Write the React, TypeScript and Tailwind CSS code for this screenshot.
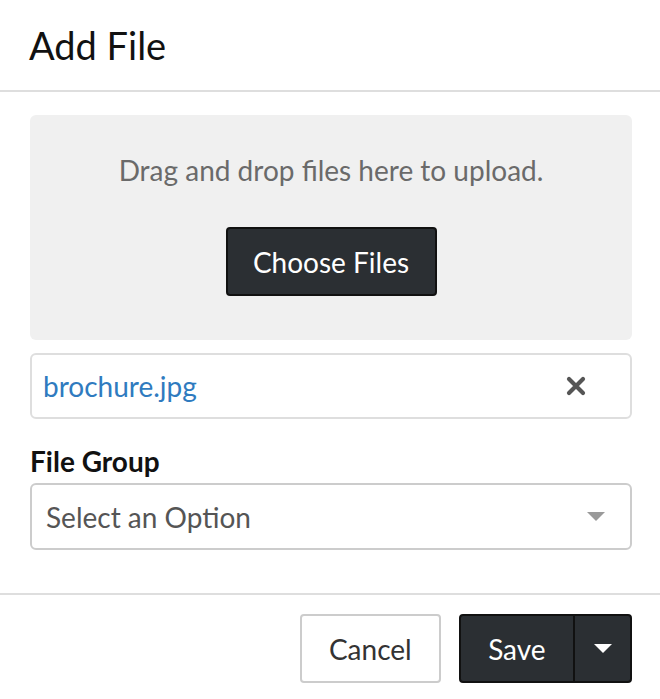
const font = { fontFamily: 'Lato, "Noto Sans", sans-serif' };

function Caret({ className }: { className?: string }) {
  return (
    <svg width="18" height="10" viewBox="0 0 18 10" className={className}>
      <path d="M0 0 L18 0 L9 9 Z" fill="currentColor" />
    </svg>
  );
}

function Times() {
  return (
    <svg width="20" height="20" viewBox="0 0 20 20" className="text-[#555]">
      <path d="M3 3 L17 17 M17 3 L3 17" stroke="currentColor" strokeWidth="4.2" strokeLinecap="round" />
    </svg>
  );
}

export default function App() {
  return (
    <div className="w-[660px] h-[699px] bg-white overflow-hidden text-[#333]" style={font}>
      <div className="h-[92px] border-b-2 border-[#dedede] pl-[29px] pt-[22px]">
        <h1 className="text-[38px] leading-[46px] text-[#111]">Add File</h1>
      </div>

      <div className="pl-[30px] pr-[28px] pt-[23px]">
        <div className="h-[225px] rounded-[6px] bg-[#f0f0f0] flex flex-col items-center pt-[38px]">
          <p className="text-[28px] leading-[34px] text-[#6a6a6a]">Drag and drop files here to upload.</p>
          <button className="mt-[40px] h-[69px] w-[211px] rounded-[4px] border-2 border-[#111] bg-[#2b2f33] text-[28px] text-white">
            Choose Files
          </button>
        </div>

        <div className="mt-[13px] h-[66px] rounded-[6px] border-2 border-[#dedede] flex items-center pl-[11px] pr-[44px]">
          <span className="flex-1 text-[28px] text-[#2f7bbf]">brochure.jpg</span>
          <Times />
        </div>

        <label className="block mt-[25px] text-[28px] leading-[34px] font-bold text-[#111]">File Group</label>
        <div className="mt-[5px] h-[67px] rounded-[6px] border-2 border-[#cccccc] flex items-center pl-[14px] pr-[25px]">
          <span className="flex-1 text-[28px] text-[#555]">Select an Option</span>
          <Caret className="text-[#9a9a9a]" />
        </div>
      </div>

      <div className="mt-[43px] border-t-2 border-[#dedede] pt-[19px] pl-[300px] pr-[28px] flex gap-[18px]">
        <button className="h-[69px] w-[141px] rounded-[4px] border-2 border-[#cccccc] bg-white text-[28px] text-[#333]">
          Cancel
        </button>
        <div className="h-[69px] flex rounded-[4px] border-2 border-[#111] bg-[#2b2f33] text-white overflow-hidden">
          <button className="w-[115px] text-[28px] border-r-2 border-[#111]">Save</button>
          <button className="w-[55px] flex items-center justify-center">
            <Caret className="text-white" />
          </button>
        </div>
      </div>
    </div>
  );
}
